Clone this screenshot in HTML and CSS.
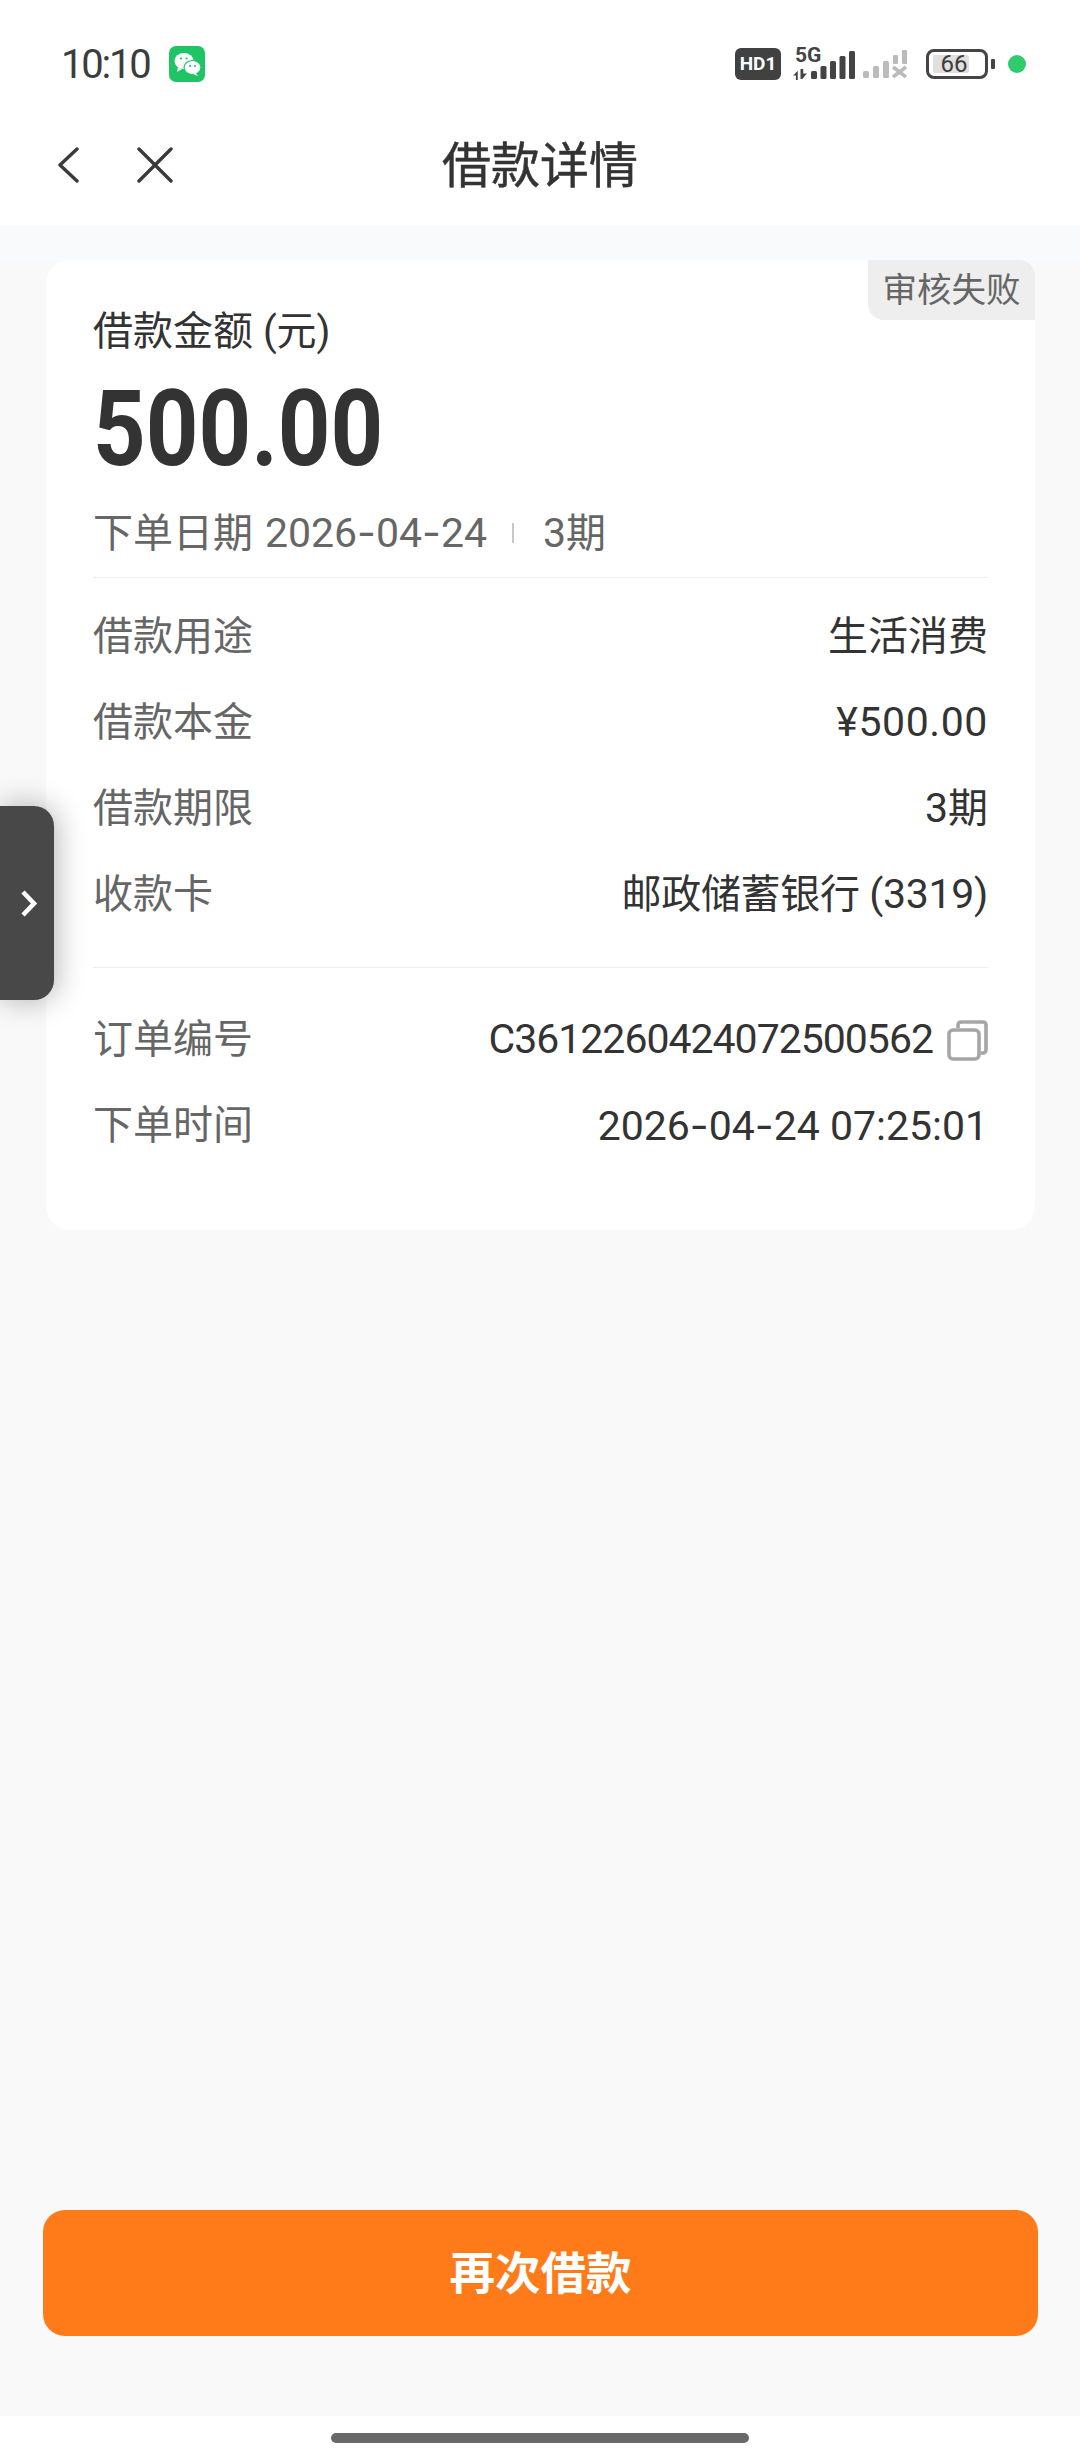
FILE: index.html
```html
<!DOCTYPE html>
<html lang="zh-CN">
<head>
  <meta charset="UTF-8" />
  <meta name="viewport" content="width=device-width, initial-scale=1.0" />
  <title>借款详情</title>
  <link rel="stylesheet" href="styles.css">
</head>
<body>
  <div class="topbar">
    <div class="statusbar">
      <div class="status-left">
        <span class="clock">10:10</span>
        <svg class="wechat" viewBox="0 0 36 36">
          <rect width="36" height="36" rx="7" fill="#1fc565"/>
          <ellipse cx="15" cy="15" rx="9.5" ry="8" fill="#fff"/>
          <path d="M9 21l-1 5 5-3z" fill="#fff"/>
          <ellipse cx="23.5" cy="21.5" rx="8.5" ry="7" fill="#fff" stroke="#1fc565" stroke-width="1.2"/>
          <path d="M27 27l2 3-5-2z" fill="#fff"/>
          <circle cx="12" cy="12.5" r="1.1" fill="#1fc565"/>
          <circle cx="17.5" cy="12.5" r="1.1" fill="#1fc565"/>
          <circle cx="21" cy="20" r="1.1" fill="#1fc565"/>
          <circle cx="26" cy="20" r="1.1" fill="#1fc565"/>
        </svg>
      </div>
      <div class="status-right">
        <span class="hd">HD1</span>
        <div class="net">
          <span class="net-label">5G</span>
          <svg class="net-arrows" viewBox="0 0 16 12">
            <path d="M0 7l5-5v10H3V7zM8 0h3v5h4l-5 6H8z" fill="#444"/>
          </svg>
          <svg class="signal" viewBox="0 0 44 28">
            <rect x="0" y="20" width="6" height="8" rx="1.5" fill="#444"/>
            <rect x="9.5" y="15" width="6" height="13" rx="1.5" fill="#444"/>
            <rect x="19" y="10" width="6" height="18" rx="1.5" fill="#444"/>
            <rect x="28.5" y="5" width="6" height="23" rx="1.5" fill="#444"/>
            <rect x="38" y="0" width="6" height="28" rx="1.5" fill="#444"/>
          </svg>
        </div>
        <svg class="signal-off" viewBox="0 0 44 28">
          <rect x="0" y="21" width="6" height="7" rx="1.5" fill="#bbb"/>
          <rect x="10" y="16" width="6" height="12" rx="1.5" fill="#bbb"/>
          <rect x="20" y="11" width="6" height="17" rx="1.5" fill="#bbb"/>
          <rect x="30" y="5" width="5" height="9" rx="1" fill="#bbb"/>
          <rect x="39" y="0" width="5" height="14" rx="1" fill="#bbb"/>
          <path d="M30 17l13 10M43 17L30 27" stroke="#bbb" stroke-width="3.6"/>
        </svg>
        <div class="battery">
          <span class="battery-fill"></span>
          <span class="battery-num">66</span>
        </div>
        <span class="battery-nub"></span>
        <span class="dot"></span>
      </div>
    </div>
    <div class="navbar">
      <svg class="nav-back" viewBox="0 0 22 36">
        <path d="M20 2L3 18l17 16" fill="none" stroke="#3a3a3a" stroke-width="3.4" stroke-linecap="round" stroke-linejoin="round"/>
      </svg>
      <svg class="nav-close" viewBox="0 0 36 36">
        <path d="M2 2l32 32M34 2L2 34" fill="none" stroke="#3a3a3a" stroke-width="3.4" stroke-linecap="round"/>
      </svg>
      <h1>借款详情</h1>
    </div>
  </div>
  <div class="strip"></div>

  <div class="content">
    <div class="card">
      <span class="tag">审核失败</span>
      <div class="summary">
        <div class="amount-label">借款金额 (元)</div>
        <div class="amount">500.00</div>
        <div class="order-date">
          <span>下单日期 <span class="num">2026<b class="dash">-</b>04<b class="dash">-</b>24</span></span>
          <i class="sep"></i>
          <span><span class="num">3</span>期</span>
        </div>
      </div>
      <div class="rows first">
        <div class="row"><span class="key">借款用途</span><span class="val">生活消费</span></div>
        <div class="row"><span class="key">借款本金</span><span class="val num wide">¥500.00</span></div>
        <div class="row"><span class="key">借款期限</span><span class="val"><span class="num">3</span>期</span></div>
        <div class="row"><span class="key">收款卡</span><span class="val card-name">邮政储蓄银行 <span class="num">(3319)</span></span></div>
      </div>
      <div class="rows">
        <div class="row">
          <span class="key">订单编号</span>
          <span class="val with-icon">
            <span class="num order-no">C3612260424072500562</span>
            <svg class="copy" viewBox="0 0 41 41">
              <path d="M11 8V5a3 3 0 0 1 3-3h22a3 3 0 0 1 3 3v25a3 3 0 0 1-3 3h-2" fill="none" stroke="#a6a6a6" stroke-width="3.6"/>
              <rect x="2" y="10" width="30" height="29" rx="4" fill="none" stroke="#a6a6a6" stroke-width="3.6"/>
            </svg>
          </span>
        </div>
        <div class="row"><span class="key">下单时间</span><span class="val num">2026<b class="dash">-</b>04<b class="dash">-</b>24 07:25:01</span></div>
      </div>
    </div>

    <button class="again" type="button">再次借款</button>
  </div>

  <div class="homebar"><span></span></div>

  <div class="side-handle">
    <svg viewBox="0 0 18 29">
      <path d="M3 3l11 11.5L3 26" fill="none" stroke="#fff" stroke-width="4.6"/>
    </svg>
  </div>
</body>
</html>
```

FILE: styles.css
```css
* {
  box-sizing: border-box;
}
body {
  margin: 0;
  height: 2460px;
  display: flex;
  flex-direction: column;
  position: relative;
  overflow: hidden;
  background-color: #ffffff;
  color: #333;
  font-family: Roboto, "Noto Sans CJK SC", sans-serif;
}

.topbar {
  height: 225px;
  background-color: #ffffff;
}
.statusbar {
  height: 110px;
  padding: 18px 54px 0 61px;
  display: flex;
  justify-content: space-between;
  align-items: center;
}
.status-left {
  display: flex;
  align-items: center;
  gap: 19px;
}
.clock {
  font-size: 40px;
  letter-spacing: -2.2px;
  color: #3c3c3c;
}
.wechat {
  width: 36px;
  height: 36px;
}
.status-right {
  display: flex;
  align-items: center;
}
.hd {
  width: 46px;
  height: 32px;
  background-color: #414141;
  border-radius: 6px;
  color: #fff;
  font-size: 19px;
  font-weight: 700;
  line-height: 32px;
  text-align: center;
  margin-right: 12px;
}
.net {
  position: relative;
  width: 62px;
  height: 32px;
}
.net-label {
  position: absolute;
  left: 2px;
  top: -1px;
  font-size: 21px;
  font-weight: 700;
  line-height: 17px;
  color: #444;
}
.net-arrows {
  position: absolute;
  left: 0;
  bottom: 0;
  width: 15px;
  height: 11px;
}
.signal {
  position: absolute;
  right: 0;
  bottom: 1px;
  width: 44px;
  height: 28px;
}
.signal-off {
  width: 44px;
  height: 28px;
  margin-left: 8px;
  margin-right: 19px;
}
.battery {
  width: 62px;
  height: 30px;
  border: 3px solid #444;
  border-radius: 8px;
  position: relative;
  display: flex;
  align-items: center;
  justify-content: center;
}
.battery-fill {
  position: absolute;
  left: 4px;
  top: 3px;
  bottom: 3px;
  width: 36px;
  background-color: #e0e0e0;
  border-radius: 2px;
}
.battery-num {
  position: relative;
  font-size: 24px;
  color: #3c3c3c;
  margin-left: -6px;
}
.battery-nub {
  width: 4px;
  height: 10px;
  margin-left: 3px;
  background-color: #444;
  border-radius: 1px;
}
.dot {
  width: 18px;
  height: 18px;
  margin-left: 13px;
  border-radius: 50%;
  background-color: #2fcb6c;
}

.navbar {
  height: 110px;
  padding-left: 57px;
  display: flex;
  align-items: center;
  position: relative;
}
.nav-back {
  width: 22px;
  height: 36px;
}
.nav-close {
  width: 36px;
  height: 36px;
  margin-left: 58px;
}
.navbar h1 {
  position: absolute;
  left: 0;
  right: 0;
  margin: 0;
  padding-bottom: 8px;
  text-align: center;
  font-size: 49px;
  font-weight: 400;
  -webkit-text-stroke: 0.5px #333;
  color: #333;
}

.strip {
  height: 35px;
  background-color: #f9fafc;
}
.content {
  flex: 1;
  background-color: #f9f9f9;
  display: flex;
  flex-direction: column;
  justify-content: space-between;
  padding: 0 42px 80px 43px;
}
.card {
  position: relative;
  margin: 0 3px 0 3px;
  height: 970px;
  background-color: #ffffff;
  border-radius: 24px;
  padding: 0 47px 0 47px;
}
.tag {
  position: absolute;
  top: 0;
  right: 0;
  width: 167px;
  height: 60px;
  background-color: #eeeeee;
  color: #666;
  font-size: 34.5px;
  line-height: 60px;
  text-align: center;
  border-radius: 0 16px 0 16px;
}

.summary {
  height: 318px;
  padding-top: 48px;
  border-bottom: 1px solid #eeeeee;
}
.amount-label {
  font-size: 40px;
  line-height: 48px;
  color: #333;
}
.amount {
  margin-top: 18px;
  font-size: 105px;
  line-height: 112px;
  font-weight: 700;
  color: #333;
  transform: scaleX(0.875);
  transform-origin: left center;
}
.order-date {
  margin-top: 22px;
  display: flex;
  align-items: center;
  font-size: 40px;
  line-height: 48px;
  word-spacing: 2px;
  color: #666;
}
.sep {
  width: 2px;
  height: 20px;
  margin: 0 29px 0 25px;
  background-color: #c8c8c8;
}
.num {
  font-size: 41px;
}
.wide {
  letter-spacing: 0.6px;
}
.order-no {
  letter-spacing: -1px;
}
.val.num, .order-no {
  padding-top: 5px;
}
.card-name {
  letter-spacing: -0.3px;
}
.dash {
  font-family: Inter, sans-serif;
  font-weight: 400;
}

.rows {
  padding: 25px 0 0;
}
.rows.first {
  padding: 12px 0 33px;
  border-bottom: 1px solid #eeeeee;
}
.row {
  height: 86px;
  display: flex;
  justify-content: space-between;
  align-items: center;
  font-size: 40px;
}
.key {
  color: #666;
}
.val {
  color: #333;
}
.with-icon {
  display: flex;
  align-items: center;
  gap: 14px;
}
.copy {
  width: 41px;
  height: 41px;
  margin-top: 8px;
}

.again {
  height: 126px;
  width: 995px;
  border: none;
  border-radius: 22px;
  padding-bottom: 8px;
  background-color: #ff7a18;
  color: #ffffff;
  font-family: inherit;
  font-size: 45.5px;
  font-weight: 700;
}

.homebar {
  height: 44px;
  background-color: #ffffff;
  padding-top: 17px;
  display: flex;
  justify-content: center;
}
.homebar span {
  width: 418px;
  height: 10px;
  border-radius: 5px;
  background-color: #696969;
}

.side-handle {
  position: absolute;
  left: 0;
  top: 806px;
  width: 54px;
  height: 194px;
  background-color: #484848;
  border-radius: 0 20px 20px 0;
  box-shadow: 2px 0 30px rgba(0, 0, 0, 0.3);
  display: flex;
  align-items: center;
  justify-content: center;
  padding-left: 3px;
}
.side-handle svg {
  width: 18px;
  height: 29px;
}
```
